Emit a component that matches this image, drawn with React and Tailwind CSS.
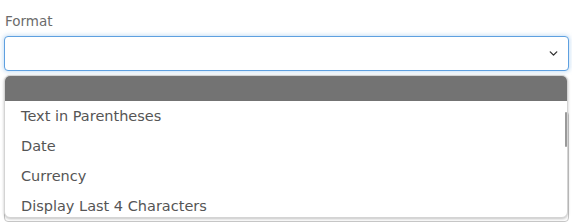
import { ChevronDown } from "lucide-react";

const options = ["Text in Parentheses", "Date", "Currency", "Display Last 4 Characters"];

export default function App() {
  return (
    <div
      className="w-[572px] h-[222px] bg-white relative overflow-hidden"
      style={{ fontFamily: "'DejaVu Sans', 'Liberation Sans', sans-serif" }}
    >
      <div className="pt-[12px] px-[4px]">
        <label className="block pl-[1px] text-[13.5px] text-[#6b6b6b] leading-[18px]">Format</label>
        <div className="mt-[6px] h-[35px] w-[565px] rounded-[4px] border border-[#5ea0e0] bg-white shadow-[0_0_4px_1px_rgba(94,160,224,0.35)] flex items-center justify-end pr-[8px]">
          <ChevronDown size={13} strokeWidth={2.5} className="text-[#333]" />
        </div>
        {/* field behind the open menu */}
        <div className="mt-[40px] h-[111px] w-[565px] rounded-[4px] border border-[#c8c8c8]" />
      </div>

      {/* open menu */}
      <div className="absolute left-[4px] top-[75px] w-[564px] h-[143px] rounded-[6px] bg-white border border-[#d4d4d4] shadow-[0_1px_3px_rgba(0,0,0,0.25)] overflow-hidden">
        <div className="h-[25px] bg-[#737373]" />
        <div className="flex flex-col pt-[1px]">
          {options.map((o) => (
            <div key={o} className="h-[30px] flex items-center pl-[16px] text-[14.5px] text-[#555]">
              {o}
            </div>
          ))}
        </div>
        <div className="absolute right-0 top-[36px] w-[2px] h-[35px] rounded bg-[#9a9a9a]" />
      </div>
    </div>
  );
}
